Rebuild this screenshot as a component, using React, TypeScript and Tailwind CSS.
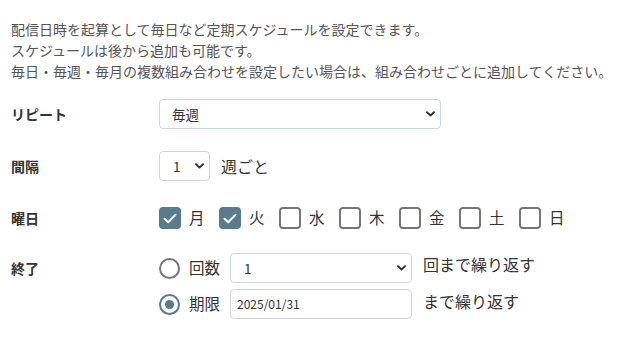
import React from "react";

const font = { fontFamily: '"Noto Sans CJK JP", "Noto Sans", sans-serif' };

function Chevron() {
  return (
    <svg
      width="9"
      height="6"
      viewBox="0 0 9 6"
      className="pointer-events-none absolute right-[6px] top-1/2 -translate-y-1/2"
    >
      <path d="M1 1.2 L4.5 4.6 L8 1.2" fill="none" stroke="#333" strokeWidth="1.9" strokeLinecap="round" strokeLinejoin="round" />
    </svg>
  );
}

function Select({ value, className, padClass }: { value: string; className: string; padClass: string }) {
  return (
    <div className={`relative ${className}`}>
      <div className={`flex h-full items-center rounded-[4px] border border-[#cfd4da] bg-white ${padClass} text-[13.5px] text-[#333]`}>
        {value}
      </div>
      <Chevron />
    </div>
  );
}

function Checkbox({ checked, label }: { checked: boolean; label: string }) {
  return (
    <div className="flex items-center">
      {checked ? (
        <div className="flex h-[22px] w-[22px] items-center justify-center rounded-[4px] bg-[#5a7b8b]">
          <svg width="14" height="11" viewBox="0 0 14 11">
            <path d="M1.5 5.8 L5.2 9.2 L12.5 1.8" fill="none" stroke="#fff" strokeWidth="2" strokeLinecap="round" strokeLinejoin="round" />
          </svg>
        </div>
      ) : (
        <div className="h-[22px] w-[22px] rounded-[4px] border-2 border-[#777] bg-white" />
      )}
      <span className="ml-[8px] w-[15px] text-[15.5px] leading-none text-[#333]">{label}</span>
    </div>
  );
}

function Radio({ checked }: { checked: boolean }) {
  return checked ? (
    <div className="flex h-[21px] w-[21px] items-center justify-center rounded-full border-2 border-[#5a7b8b] bg-white">
      <div className="h-[9px] w-[9px] rounded-full bg-[#5a7b8b]" />
    </div>
  ) : (
    <div className="h-[21px] w-[21px] rounded-full border-2 border-[#777] bg-white" />
  );
}

export default function App() {
  const days: [string, boolean][] = [
    ["月", true],
    ["火", true],
    ["水", false],
    ["木", false],
    ["金", false],
    ["土", false],
    ["日", false],
  ];
  return (
    <div className="min-h-[341px] w-[627px] bg-white px-[11px] pt-[19px]" style={font}>
      <p className="text-[14px] leading-[21px] text-[#555]">
        配信日時を起算として毎日など定期スケジュールを設定できます。
        <br />
        スケジュールは後から追加も可能です。
        <br />
        毎日・毎週・毎月の複数組み合わせを設定したい場合は、組み合わせごとに追加してください。
      </p>

      <div className="mt-[17px] flex h-[30px] items-center">
        <div className="w-[148px] text-[14px] font-bold text-[#333]">リピート</div>
        <Select value="毎週" className="h-[30px] w-[282px]" padClass="pl-[12px]" />
      </div>

      <div className="mt-[22px] flex h-[30px] items-center">
        <div className="w-[148px] text-[14px] font-bold text-[#333]">間隔</div>
        <Select value="1" className="h-[30px] w-[51px]" padClass="pl-[13px]" />
        <span className="ml-[11px] text-[16px] text-[#333]">週ごと</span>
      </div>

      <div className="mt-[26px] flex h-[22px] items-center">
        <div className="w-[148px] text-[14px] font-bold text-[#333]">曜日</div>
        <div className="flex gap-[15px]">
          {days.map(([d, c]) => (
            <Checkbox key={d} label={d} checked={c} />
          ))}
        </div>
      </div>

      <div className="mt-[24px] flex">
        <div className="flex h-[30px] w-[148px] items-center text-[14px] font-bold text-[#333]">終了</div>
        <div className="flex flex-col gap-[6px]">
          <div className="flex h-[30px] items-center">
            <Radio checked={false} />
            <span className="ml-[9px] text-[15.5px] text-[#333]">回数</span>
            <Select value="1" className="ml-[10px] h-[30px] w-[182px]" padClass="pl-[13px]" />
            <span className="ml-[11px] -mt-[8px] text-[16px] text-[#333]">回まで繰り返す</span>
          </div>
          <div className="flex h-[30px] items-center">
            <Radio checked={true} />
            <span className="ml-[9px] text-[15.5px] text-[#333]">期限</span>
            <div className="ml-[10px] flex h-[30px] w-[182px] items-center rounded-[4px] border border-[#cfd4da] bg-white pl-[6px] text-[12px] text-[#333]">
              2025/01/31
            </div>
            <span className="ml-[11px] -mt-[6px] text-[16px] text-[#333]">まで繰り返す</span>
          </div>
        </div>
      </div>
    </div>
  );
}
